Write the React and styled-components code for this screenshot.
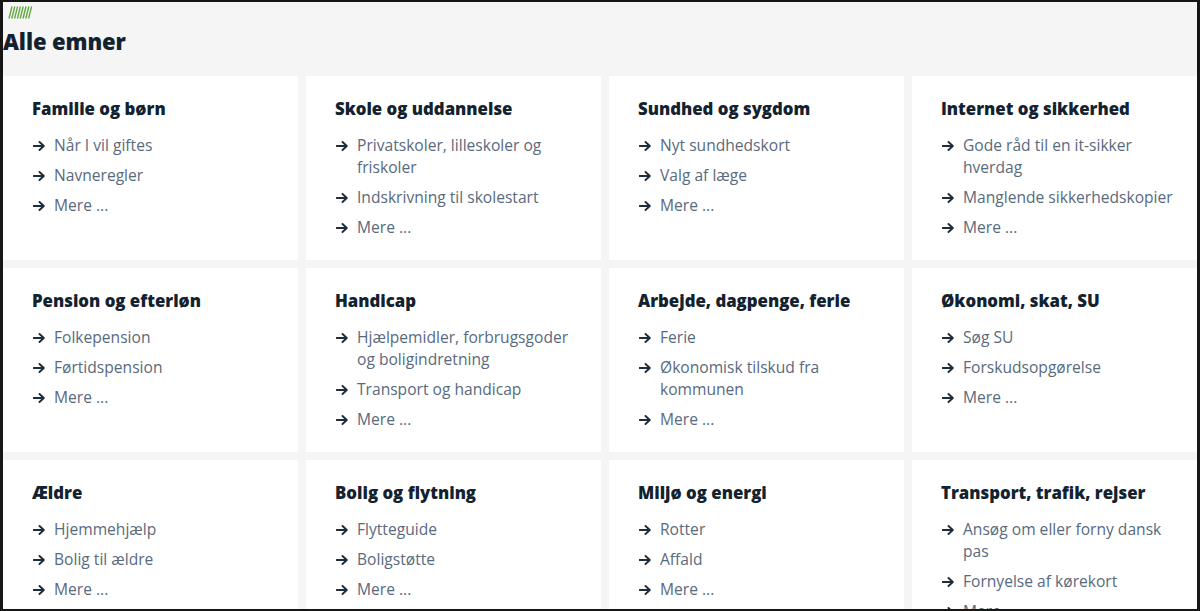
import React from "react";
import styled, { createGlobalStyle } from "styled-components";

const GlobalStyle = createGlobalStyle`
  html, body { margin: 0; padding: 0; }
  body {
    font-family: "Open Sans", "Noto Sans", sans-serif;
    background: #f5f5f5;
  }
  * { box-sizing: border-box; }
`;

const Frame = styled.div`
  width: 1200px;
  height: 611px;
  border: 2px solid #161616;
  border-left-width: 3px;
  border-right-width: 3px;
  background: #f5f5f5;
  overflow: hidden;
`;

const Header = styled.header`
  padding: 4px 0 0 0;
`;

const Logo = styled.svg`
  display: block;
  margin-left: 3px;
  width: 26px;
  height: 13px;
`;

const Title = styled.h1`
  margin: 7px 0 0 0;
  font-size: 22px;
  line-height: 30px;
  font-weight: 800;
  color: #13222f;
  letter-spacing: -0.1px;
`;

const Grid = styled.div`
  margin-top: 20px;
  display: grid;
  grid-template-columns: repeat(4, 295px);
  grid-auto-rows: 184px;
  gap: 8px;
`;

const Card = styled.section`
  background: #ffffff;
  padding: 21px 24px 0 29px;
`;

const CardTitle = styled.h2`
  margin: 0 0 13px 0;
  font-size: 16.8px;
  line-height: 24px;
  font-weight: 800;
  color: #13222f;
`;

const List = styled.ul`
  list-style: none;
  margin: 0;
  padding: 0;
  display: flex;
  flex-direction: column;
  gap: 8px;
`;

const Item = styled.li`
  display: flex;
  align-items: flex-start;
  font-size: 15.6px;
  line-height: 22px;
  color: #596a7d;
`;

const Arrow = styled.svg`
  flex: 0 0 auto;
  width: 12px;
  height: 10px;
  margin: 7px 9px 0 1px;
`;

const LinkText = styled.a`
  color: inherit;
  text-decoration: none;
  font-weight: 500;
`;

const topics = [
  { title: "Familie og børn", links: ["Når I vil giftes", "Navneregler"] },
  { title: "Skole og uddannelse", links: ["Privatskoler, lilleskoler og friskoler", "Indskrivning til skolestart"] },
  { title: "Sundhed og sygdom", links: ["Nyt sundhedskort", "Valg af læge"] },
  { title: "Internet og sikkerhed", links: ["Gode råd til en it-sikker hverdag", "Manglende sikkerhedskopier"] },
  { title: "Pension og efterløn", links: ["Folkepension", "Førtidspension"] },
  { title: "Handicap", links: ["Hjælpemidler, forbrugsgoder og boligindretning", "Transport og handicap"] },
  { title: "Arbejde, dagpenge, ferie", links: ["Ferie", "Økonomisk tilskud fra kommunen"] },
  { title: "Økonomi, skat, SU", links: ["Søg SU", "Forskudsopgørelse"] },
  { title: "Ældre", links: ["Hjemmehjælp", "Bolig til ældre"] },
  { title: "Bolig og flytning", links: ["Flytteguide", "Boligstøtte"] },
  { title: "Miljø og energi", links: ["Rotter", "Affald"] },
  { title: "Transport, trafik, rejser", links: ["Ansøg om eller forny dansk pas", "Fornyelse af kørekort"] },
];

function ArrowIcon() {
  return (
    <Arrow viewBox="0 0 12 10" aria-hidden="true">
      <path
        d="M0.5 5 H10.5 M6.5 1 L10.8 5 L6.5 9"
        fill="none"
        stroke="#1e2d3b"
        strokeWidth="1.9"
        strokeLinecap="round"
        strokeLinejoin="round"
      />
    </Arrow>
  );
}

export default function App() {
  return (
    <>
      <GlobalStyle />
      <Frame>
        <Header>
          <Logo viewBox="0 0 26 13" aria-hidden="true">
            {Array.from({ length: 8 }).map((_, i) => (
              <line
                key={i}
                x1={3 + i * 2.8}
                y1={12.5}
                x2={6 + i * 2.8}
                y2={0.5}
                stroke="#66a843"
                strokeWidth="1.4"
              />
            ))}
          </Logo>
          <Title>Alle emner</Title>
        </Header>
        <Grid>
          {topics.map((t) => (
            <Card key={t.title}>
              <CardTitle>{t.title}</CardTitle>
              <List>
                {[...t.links, "Mere ..."].map((l) => (
                  <Item key={l}>
                    <ArrowIcon />
                    <LinkText href="#">{l}</LinkText>
                  </Item>
                ))}
              </List>
            </Card>
          ))}
        </Grid>
      </Frame>
    </>
  );
}
